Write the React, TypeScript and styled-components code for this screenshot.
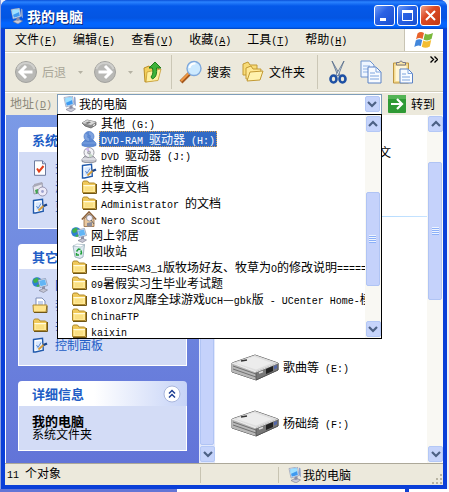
import React from "react";
import styled, { createGlobalStyle, css } from "styled-components";

const sans = `"Noto Sans CJK SC", "Noto Sans", sans-serif`;

const GlobalStyle = createGlobalStyle`
  * { box-sizing: border-box; }
  body { margin: 0; font: 12px/16px ${sans}; color: #000; overflow: hidden; }
  button, select { font: inherit; color: inherit; margin: 0; padding: 0; border: 0; background: none; }
  ul { list-style: none; margin: 0; padding: 0; }
  h1, h2, p { margin: 0; }
  svg { display: block; flex: none; }
`;

/* ---------- text ---------- */

const Latin = styled.span`
  font-family: "Liberation Mono", monospace;
  font-size: 10px;
`;

const Line = styled.span`
  white-space: pre;
`;

function Text({ children }: { children: string }) {
  return (
    <Line>
      {children.split(/([\x20-\x7e]+)/).map((part, i) =>
        i % 2 ? <Latin key={i}>{part}</Latin> : part
      )}
    </Line>
  );
}

/* ---------- icons ---------- */

const ComputerIcon = ({ size = 16 }: { size?: number }) => (
  <svg width={size} height={size} viewBox="0 0 16 16">
    <path d="M4 13.500l5-2.500 4.500 2-4.500 3z" fill="#c9cad8" stroke="#77788c" strokeWidth=".6" />
    <path d="M7.500 10l3-1v3.500l-3 .5z" fill="#8c8ea5" />
    <path d="M2 1.500l8.500-1.500 1.500 8.500-8 2.500z" fill="#e8eef8" stroke="#7d8cab" strokeWidth=".6" />
    <path d="M3 2.200l6.700-1.200 1.200 7-6.200 1.800z" fill="#3f9af0" />
    <path d="M3 2.200l6.700-1.200.5 3L3.700 7z" fill="#9fe0ff" />
    <path d="M12 .5l1.500 1 .5 9-2-2.500z" fill="#8ea3cf" />
  </svg>
);

const FolderIcon = () => (
  <svg width="16" height="16" viewBox="0 0 16 16">
    <path d="M1.500 13.500v-10l1-1.500h4l1.500 2h5.500l1 1v8.500z" fill="#f0c95a" stroke="#b08a2c" />
    <path d="M2.500 13V6h11.500v7z" fill="#ffe996" />
    <path d="M2.500 6.500H14" stroke="#fffbe0" />
    <path d="M4 11h8M4 9h8" stroke="#f5d671" />
    <path d="M15.500 5v9.500H2" stroke="#6e5618" fill="none" />
  </svg>
);

const RemovableIcon = () => (
  <svg width="16" height="16" viewBox="0 0 16 16">
    <path d="M1 8l5-3 9 2v3l-5 3-6-2z" fill="#8b8b8b" stroke="#585858" strokeWidth=".7" />
    <path d="M1 8l5-3 9 2-5 3z" fill="#d9d9d9" />
    <path d="M4 8l4-1.500 2 1L6.500 9z" fill="#777" />
    <path d="M12 10.500l2-1" stroke="#fff" />
  </svg>
);

const DiscIcon = ({ selected }: { selected?: boolean }) => {
  const c = selected ? ["#7fa3df", "#5f8bd4", "#4a78c6"] : ["#f2f2f6", "#c4c4cc", "#777783"];
  return (
    <svg width="16" height="16" viewBox="0 0 16 16">
      <path d="M1 12l3-3h8l3 3v2.500l-3 1H4l-3-1z" fill={c[1]} stroke={c[2]} strokeWidth=".7" />
      <path d="M1 12h14" stroke={c[0]} />
      <circle cx="8" cy="5.500" r="5" fill={c[0]} stroke={c[2]} strokeWidth=".7" />
      <path d="M8 5.500L4.500 2A5 5 0 0 1 8 .8z" fill={selected ? c[1] : "#cdb8ee"} />
      <path d="M8 5.500l4 3a5 5 0 0 1-4 2z" fill={selected ? c[1] : "#c6d8c8"} />
      <circle cx="8" cy="5.500" r="1.500" fill={c[1]} stroke={c[2]} strokeWidth=".5" />
    </svg>
  );
};

const ControlPanelIcon = () => (
  <svg width="16" height="16" viewBox="0 0 16 16">
    <path d="M1.500 2.500l9-1.200.8 12-7.800 1.700h-2z" fill="#fff" stroke="#2059ac" strokeWidth="1.400" />
    <path d="M3.500 4.500l6-.8.5 7.800-6.500 1.500z" fill="#d9e9ff" />
    <path d="M4.500 8l1.500 2.500L9 5.500" stroke="#5b8ad0" fill="none" />
    <path d="M6.500 12.500l6-5.500" stroke="#d79c38" strokeWidth="1.800" />
    <path d="M11.500 8l3.500-1.500" stroke="#17438c" strokeWidth="2.400" />
  </svg>
);

const HouseIcon = () => (
  <svg width="16" height="16" viewBox="0 0 16 16">
    <path d="M3 8v7.500h10V8L8 3z" fill="#e9c9a0" stroke="#94683c" strokeWidth=".8" />
    <path d="M.8 8.500L8 1l7.200 7.500" fill="none" stroke="#8a5e38" strokeWidth="1.600" />
    <circle cx="8.500" cy="7" r="3" fill="#f5f2ff" stroke="#888" strokeWidth=".8" />
    <path d="M6 15.500V12l5-1v4.500z" fill="#8d8d98" />
    <path d="M10 9l3 4" stroke="#666" />
  </svg>
);

const NetworkIcon = () => (
  <svg width="16" height="16" viewBox="0 0 16 16">
    <circle cx="5" cy="5" r="4.800" fill="#2f7fd0" />
    <path d="M1 3l4-2.500 2 2-2 3-3 .5zM4 9l3-2 1 2-2 1z" fill="#3fb24a" />
    <path d="M6 3l7.500-1.500 2 7-7.500 2z" fill="#e2e8f4" stroke="#6f7fa0" strokeWidth=".6" />
    <path d="M7 3.800l6-1.200 1.300 5.200-5.800 1.500z" fill="#62b5f5" />
    <path d="M10 10l3-1v3l-3 .8z" fill="#8d90aa" />
    <path d="M7 13.500l4.500-2 4 1.500-4 2.500z" fill="#c4c5d3" stroke="#77788c" strokeWidth=".6" />
  </svg>
);

const RecycleIcon = () => (
  <svg width="16" height="16" viewBox="0 0 16 16">
    <path d="M2 3l11.500-1.500L12 14l-3 1.500L4 14z" fill="#dce9ef" stroke="#8ea5b2" strokeWidth=".8" />
    <path d="M2 3l4-2 7.500.8L10 4z" fill="#fff" stroke="#9fb3bf" strokeWidth=".6" />
    <path d="M5.500 8.500l2-2.500 2 .5M10 7.500l.5 2.500-1 1.500M8 12H5.500v-2" fill="none" stroke="#20a03a" strokeWidth="1.500" />
  </svg>
);

const ChecklistIcon = () => (
  <svg width="16" height="16" viewBox="0 0 16 16">
    <path d="M2.500.8h8l3 3v11.500h-11z" fill="#fff" stroke="#6b7a9e" />
    <path d="M10.500.8v3h3" fill="#ccd6ee" stroke="#6b7a9e" />
    <path d="M5 8.500l2 3L11.500 6" fill="none" stroke="#e0401c" strokeWidth="2" />
  </svg>
);

const ProgramsIcon = () => (
  <svg width="16" height="16" viewBox="0 0 16 16">
    <path d="M1 5l9-3 1 9-9 2z" fill="#e6e6ee" stroke="#888899" strokeWidth=".8" />
    <path d="M2 3l8-2 1 2-9 3z" fill="#a9a9b8" />
    <path d="M3 9l3-1v4l-2 1z" fill="#42a550" />
    <circle cx="10.500" cy="10.500" r="4.500" fill="#eceaf8" stroke="#8380a0" strokeWidth=".8" />
    <circle cx="10.500" cy="10.500" r="1.400" fill="#9ea2cf" />
  </svg>
);

const DocumentsIcon = () => (
  <svg width="16" height="16" viewBox="0 0 16 16">
    <path d="M4 1h6l3 3v8H4z" fill="#fff" stroke="#6f82ae" strokeWidth=".9" />
    <path d="M6 5h5M6 7h5" stroke="#8ba6dc" />
    <path d="M1 8h14l-1 7H1.500z" fill="#ffe48c" stroke="#b08a2c" />
    <path d="M2 15.500h13V9" stroke="#6e5618" fill="none" />
  </svg>
);

const DriveIcon = () => (
  <svg width="48" height="28" viewBox="0 0 48 28">
    <path d="M1 9L24 1l23 8v7L25 26 1 18z" fill="#8d8d8d" stroke="#555" />
    <path d="M1 9L24 1l23 8-22 9z" fill="#dedede" />
    <path d="M5 9l18-6.500L41 9l-16 6.500z" fill="#ececec" />
    <path d="M1 9v9l24 8v-8z" fill="#b8b8b8" />
    <path d="M2 12l23 8M2 15l23 8" stroke="#707070" />
    <path d="M25 18l22-9v7l-22 10z" fill="#777" stroke="#4c4c4c" strokeWidth=".7" />
    <path d="M35 15l7-3v5l-7 3z" fill="#222" />
    <path d="M43 12l3-1v3l-3 1.500z" fill="#5266a8" />
    <path d="M28 19l4-1.500" stroke="#ddd" strokeWidth="1.500" />
    <path d="M10 7l6-1" stroke="#333" strokeWidth="1.500" />
    <path d="M1 9l24 9 22-9" fill="none" stroke="#fff" strokeWidth=".8" />
  </svg>
);

const CircleArrowIcon = ({ forward }: { forward?: boolean }) => (
  <svg width="24" height="24" viewBox="0 0 24 24">
    <circle cx="12" cy="12" r="10.500" fill="#b9b9b6" stroke="#a3a39f" />
    <path d="M3.500 9a9 9 0 0 1 17 0" fill="none" stroke="#cfcfcc" strokeWidth="2" />
    <path
      d={forward ? "M5.500 12h11M12 6l6 6-6 6" : "M18.500 12h-11M12 6l-6 6 6 6"}
      fill="none"
      stroke="#fff"
      strokeWidth="3"
    />
  </svg>
);

const UpFolderIcon = () => (
  <svg width="20" height="24" viewBox="0 0 20 24">
    <path d="M1 8l5-2 2 2 8-1-2 13-12 2z" fill="#f3cf5c" stroke="#b98f28" />
    <path d="M4 12l14-3-3 11.500-12 1.500z" fill="#fff0a0" stroke="#c79c34" strokeWidth=".8" />
    <path d="M9.500 19c4-2 4.500-6 4-11H18L12 2 6 8h3.500c.6 4 .8 6-1.500 9z" fill="#3fb23a" stroke="#1d7d1c" />
  </svg>
);

const SearchIcon = () => (
  <svg width="24" height="24" viewBox="0 0 24 24">
    <path d="M2 22l9-9" stroke="#a2561c" strokeWidth="4" />
    <path d="M2 21l8-8" stroke="#f19a45" strokeWidth="2" />
    <circle cx="15" cy="8.500" r="7" fill="#cdeaff" stroke="#7fa9dc" strokeWidth="1.400" />
    <path d="M10.500 8a5 5 0 0 1 6-4.500" fill="none" stroke="#fff" strokeWidth="2" />
  </svg>
);

const FoldersIcon = () => (
  <svg width="24" height="24" viewBox="0 0 24 24">
    <path d="M2 15V4l5-2 2 3h7v10z" fill="#f8dc78" stroke="#c39a34" />
    <path d="M5 19V8l5-2 2 3h8l-1 10z" fill="#ffe894" stroke="#c39a34" />
    <path d="M6 21l3-9 13-1-3 9z" fill="#fff2ae" stroke="#c39a34" />
  </svg>
);

const CutIcon = () => (
  <svg width="18" height="24" viewBox="0 0 18 24">
    <path d="M3 1l8 14-2 1z" fill="#c6d2e0" stroke="#536a88" strokeWidth=".8" />
    <path d="M15 1L7 15l2 1z" fill="#e9eff6" stroke="#536a88" strokeWidth=".8" />
    <ellipse cx="4.500" cy="19" rx="3" ry="3.500" fill="none" stroke="#1e50a4" strokeWidth="2.600" />
    <ellipse cx="13.500" cy="19" rx="3" ry="3.500" fill="none" stroke="#1e50a4" strokeWidth="2.600" />
  </svg>
);

const CopyIcon = () => (
  <svg width="22" height="24" viewBox="0 0 22 24">
    <path d="M1 1h9l4 4v12H1z" fill="#eff6ff" stroke="#6f94cf" />
    <path d="M3 6h7M3 9h8M3 12h5" stroke="#8fb2e5" />
    <path d="M8 7h8l5 5v11H8z" fill="#f8fbff" stroke="#5b82c4" />
    <path d="M16 7v5h5M10 13h5M10 16h9M10 19h9" stroke="#7fa5df" fill="none" />
  </svg>
);

const PasteIcon = () => (
  <svg width="22" height="24" viewBox="0 0 22 24">
    <path d="M1.500 3h15v20h-15z" fill="#f4da90" stroke="#bd953f" />
    <path d="M3.500 6h11v15h-11z" fill="#fff6d6" />
    <path d="M4.500 5V2.500h2.500L9 .8l2 1.700h2.500V5z" fill="#f6e3a6" stroke="#77778a" />
    <path d="M8 9h8l4.500 4.500V23H8z" fill="#f8fbff" stroke="#5b82c4" />
    <path d="M16 9v4.500h4.500M10 14h4M10 17h8M10 20h8" stroke="#7fa5df" fill="none" />
  </svg>
);

const FlagIcon = () => (
  <svg width="20" height="18" viewBox="0 0 20 18">
    <path d="M3.500 2.500Q6.500 0 10 2L8.500 8Q5 6 2 8.500z" fill="#e8632c" />
    <path d="M11 2.500q3 2 8-.5L17.500 8q-4 2.500-8 .5z" fill="#79b83c" />
    <path d="M1.800 9.500Q5 7.500 8.200 9L6.800 15Q3.500 13.500.3 16z" fill="#4287dc" />
    <path d="M9.200 9.500q4 2 8-.5L15.800 15.500q-4 2.500-8 .3z" fill="#f3bd32" />
  </svg>
);

const GoIcon = () => (
  <svg width="18" height="18" viewBox="0 0 18 18">
    <rect width="18" height="18" rx="1" fill="#2f9a35" />
    <path d="M0 0h18v4H0z" fill="#54b455" />
    <path d="M3 9h10M9 4l5 5-5 5" fill="none" stroke="#fff" strokeWidth="2.200" />
  </svg>
);

const Chevron = ({ up }: { up?: boolean }) => (
  <svg width="10" height="8" viewBox="0 0 10 8">
    <path d={up ? "M1 6l4-4 4 4" : "M1 2l4 4 4-4"} fill="none" stroke="#4d6185" strokeWidth="2.200" />
  </svg>
);

const CaretIcon = () => (
  <svg width="5" height="3" viewBox="0 0 5 3">
    <path d="M0 0h5L2.500 3z" fill="#b5b2a4" />
  </svg>
);

const MoreIcon = () => (
  <svg width="8" height="7" viewBox="0 0 8 7">
    <path d="M.5.5l3 3-3 3M4.500.5l3 3-3 3" fill="none" stroke="#000" strokeWidth="1.400" />
  </svg>
);

const CollapseIcon = () => (
  <svg width="18" height="18" viewBox="0 0 18 18">
    <circle cx="9" cy="9" r="8" fill="#fff" stroke="#a9b6dc" />
    <path d="M6 8.500l3-3 3 3M6 12.500l3-3 3 3" fill="none" stroke="#1f3f94" strokeWidth="1.500" />
  </svg>
);

const GripIcon = () => (
  <svg width="12" height="12" viewBox="0 0 12 12">
    <path d="M9 1h2v2H9zM5 5h2v2H5zM9 5h2v2H9zM1 9h2v2H1zM5 9h2v2H5zM9 9h2v2H9z" fill="#b8b4a2" />
  </svg>
);

/* ---------- window frame ---------- */

const Desktop = styled.div`
  height: 100vh;
  padding: 0 2px 3px 1px;
  background:
    linear-gradient(#1040d0, #1040d0) 405px 100% / 4px 3px no-repeat,
    linear-gradient(90deg, #6375d6 177px, #fff 177px) 0 100% / 100% 3px no-repeat,
    linear-gradient(90deg, #8c9fe0 1px, #eef1fa 1px);
`;

const Window = styled.main`
  height: 100%;
  display: flex;
  flex-direction: column;
  padding: 0 4px 4px;
  background: #0a3fd8;
  border-radius: 7px 7px 0 0;
`;

const TitleBar = styled.header`
  flex: none;
  height: 29px;
  margin: 0 -4px;
  padding: 2px 6px 0 8px;
  display: flex;
  align-items: center;
  border-radius: 7px 7px 0 0;
  background: linear-gradient(#0a50d8, #2a83ff 2px, #0459ea 6px, #0455e2 18px, #0265ff 23px, #0263fb 27px, #0244bd);
`;

const Title = styled.h1`
  flex: 1;
  padding-left: 2px;
  font-size: 14px;
  line-height: 20px;
  color: #fff;
  text-shadow: 1px 1px #0a2a80;
`;

const CaptionButton = styled.button<{ $close?: boolean }>`
  width: 21px;
  height: 21px;
  display: grid;
  place-items: center;
  border: 1px solid #fff;
  border-radius: 3px;
  background: ${(p) =>
    p.$close
      ? "linear-gradient(135deg, #f0a58c, #dc4a24 40%, #c03a14)"
      : "linear-gradient(135deg, #6f9cf8, #2a62e4 40%, #1a4fd0)"};
`;

const CaptionButtons = styled.div`
  display: flex;
  gap: 2px;
`;

const barFace = css`
  flex: none;
  display: flex;
  align-items: center;
  background: #ece9dc;
`;

const MenuBar = styled.nav`
  ${barFace}
  height: 23px;
  padding-left: 10px;
  gap: 16px;
  border-bottom: 1px solid #d0ccba;
`;

const MenuButton = styled.button`
  white-space: nowrap;
`;

const Throbber = styled.div`
  align-self: stretch;
  width: 39px;
  margin-left: auto;
  display: grid;
  place-items: center;
  background: #fff;
  border-left: 1px solid #c8c4b4;
`;

const ToolBar = styled.div`
  ${barFace}
  height: 40px;
  padding: 0 5px 0 9px;
  border-top: 1px solid #fff;
  border-bottom: 1px solid #d0ccba;
`;

const ToolButton = styled.button<{ $gap?: number; $after?: number }>`
  display: flex;
  align-items: center;
  gap: ${(p) => p.$gap ?? 4}px;
  margin-right: ${(p) => p.$after ?? 10}px;
  white-space: nowrap;
  &:disabled { color: #a9a698; }
`;

const Separator = styled.span<{ $after: number }>`
  width: 1px;
  height: 34px;
  margin-right: ${(p) => p.$after}px;
  background: #cbc7b6;
`;

const Caret = styled.span`
  padding-left: 8px;
`;

const More = styled.button`
  align-self: flex-start;
  margin-left: auto;
  padding-top: 3px;
`;

const AddressBar = styled.div`
  ${barFace}
  position: relative;
  z-index: 2;
  height: 23px;
  padding: 0 8px 0 5px;
  border-top: 1px solid #fff;
`;

const AddressLabel = styled.label`
  width: 47px;
  color: #8b887a;
  white-space: nowrap;
`;

const Combo = styled.div`
  position: relative;
  flex: 1;
  height: 21px;
  display: flex;
  align-items: center;
  padding: 0 1px 0 4px;
  background: #fff;
  border: 1px solid #7f9db9;
`;

const ComboSelect = styled.select`
  flex: 1;
  appearance: none;
  padding-left: 1px;
  outline: 0;
`;

const GoButton = styled.button`
  display: flex;
  align-items: center;
  gap: 5px;
  margin-left: 6px;
`;

/* ---------- scroll bars ---------- */

const ScrollTrack = styled.div<{ $tint?: boolean }>`
  flex: none;
  width: 16px;
  display: flex;
  flex-direction: column;
  padding: 1px;
  background: ${(p) => (p.$tint ? "#e3e9fb" : "#f9f8f3")};
`;

const ScrollButton = styled.button`
  flex: none;
  width: 15px;
  height: 16px;
  display: grid;
  place-items: center;
  border: 1px solid #b4c8f6;
  border-radius: 2px;
  background: #c6d4fb;
`;

const ScrollThumb = styled.div<{ $before: number; $length: number }>`
  flex: 0 1 ${(p) => p.$length}px;
  margin: ${(p) => p.$before}px 0 auto;
  display: grid;
  place-items: center;
  border: 1px solid #b0c4f4;
  border-radius: 2px;
  background: #c5d2fb;
`;

const ThumbGrip = styled.span`
  width: 7px;
  height: 8px;
  background: repeating-linear-gradient(#eef4fe 0 1px, #8cb0f8 1px 2px);
`;

function ScrollBar(props: { before: number; length: number; tint?: boolean }) {
  return (
    <ScrollTrack $tint={props.tint}>
      <ScrollButton aria-label="向上滚动"><Chevron up /></ScrollButton>
      <ScrollThumb $before={props.before} $length={props.length}><ThumbGrip /></ScrollThumb>
      <ScrollButton aria-label="向下滚动"><Chevron /></ScrollButton>
    </ScrollTrack>
  );
}

/* ---------- address drop-down ---------- */

const Popup = styled.div`
  position: absolute;
  top: 100%;
  left: -1px;
  right: -1px;
  height: 225px;
  display: flex;
  border: 1px solid #000;
  background: #fff;
`;

const PlaceList = styled.ul`
  flex: 1;
  min-width: 0;
  overflow: hidden;
`;

const Place = styled.li<{ $depth: number }>`
  height: 16px;
  display: flex;
  gap: 2px;
  padding-left: ${(p) => 3 + p.$depth * 10}px;
`;

const PlaceName = styled.span<{ $selected?: boolean }>`
  padding: 0 2px;
  line-height: 16px;
  ${(p) =>
    p.$selected &&
    css`
      color: #fff;
      background: #316ac5;
      outline: 1px dotted #d8a050;
      outline-offset: -1px;
    `}
`;

const places: { depth: number; name: string; icon: React.ReactNode; selected?: boolean }[] = [
  { depth: 2, name: "其他 (G:)", icon: <RemovableIcon /> },
  { depth: 2, name: "DVD-RAM 驱动器 (H:)", icon: <DiscIcon selected />, selected: true },
  { depth: 2, name: "DVD 驱动器 (J:)", icon: <DiscIcon /> },
  { depth: 2, name: "控制面板", icon: <ControlPanelIcon /> },
  { depth: 2, name: "共享文档", icon: <FolderIcon /> },
  { depth: 2, name: "Administrator 的文档", icon: <FolderIcon /> },
  { depth: 2, name: "Nero Scout", icon: <HouseIcon /> },
  { depth: 1, name: "网上邻居", icon: <NetworkIcon /> },
  { depth: 1, name: "回收站", icon: <RecycleIcon /> },
  { depth: 1, name: "======SAM3_1版牧场好友、牧草为O的修改说明======", icon: <FolderIcon /> },
  { depth: 1, name: "09暑假实习生毕业考试题", icon: <FolderIcon /> },
  { depth: 1, name: "Bloxorz风靡全球游戏UCH—gbk版 - UCenter Home-模", icon: <FolderIcon /> },
  { depth: 1, name: "ChinaFTP", icon: <FolderIcon /> },
  { depth: 1, name: "kaixin", icon: <FolderIcon /> },
];

/* ---------- body ---------- */

const Body = styled.div`
  flex: 1;
  min-height: 0;
  display: flex;
  background: #fff;
`;

const Sidebar = styled.aside`
  flex: none;
  width: 194px;
  overflow: hidden;
  display: flex;
  flex-direction: column;
  gap: 15px;
  padding: 12px;
  border-left: 1px solid #fff;
  background: linear-gradient(#7b9ae6, #6274d8);
`;

const Panel = styled.section`
  flex: none;
`;

const PanelHeader = styled.header`
  height: 25px;
  display: flex;
  align-items: center;
  justify-content: space-between;
  padding: 0 6px 0 14px;
  border-radius: 4px 4px 0 0;
  background: linear-gradient(90deg, #fff 45%, #c6d3f7);
`;

const PanelTitle = styled.h2`
  font-size: 13px;
  line-height: 18px;
  color: #215dc6;
`;

const PanelBody = styled.div<{ $height: number }>`
  min-height: ${(p) => p.$height}px;
  padding: 8px 13px;
  border: 1px solid #fff;
  border-top: 0;
  background: #d3dcf6;
`;

const TaskList = styled.ul<{ $pitch: number }>`
  display: grid;
  grid-auto-rows: ${(p) => p.$pitch}px;
`;

const TaskLink = styled.a`
  display: flex;
  align-items: center;
  gap: 7px;
  color: #215dc6;
  text-decoration: none;
`;

const DetailName = styled.p`
  font-size: 13px;
  font-weight: 700;
  line-height: 14px;
`;

const DetailType = styled.p`
  line-height: 12px;
`;

const Content = styled.section`
  flex: 1;
  min-width: 0;
  overflow: hidden;
`;

const FolderName = styled.p`
  padding: 29px 36px 0 0;
  text-align: right;
`;

const GroupRule = styled.hr`
  height: 1px;
  margin: 56px 0 123px;
  border: 0;
  background: linear-gradient(90deg, #70bfff, #c8e4ff);
`;

const Drive = styled.li`
  height: 56px;
  display: flex;
  align-items: center;
  gap: 4px;
  padding-left: 16px;
`;

const StatusBar = styled.footer`
  ${barFace}
  height: 22px;
  padding-left: 2px;
  border-top: 1px solid #aca899;
`;

const StatusCell = styled.div<{ $width?: number }>`
  ${(p) => (p.$width ? `flex: none; width: ${p.$width}px;` : "flex: 1;")}
  height: 16px;
  display: flex;
  align-items: center;
  & + & {
    border-left: 1px solid #c8c4b2;
    padding-left: 8px;
  }
`;

const Grip = styled.div`
  align-self: flex-end;
`;

const menus: [string, string][] = [
  ["文件", "F"], ["编辑", "E"], ["查看", "V"], ["收藏", "A"], ["工具", "T"], ["帮助", "H"],
];

const systemTasks: [string, React.ReactNode][] = [
  ["查看系统信息", <ChecklistIcon />],
  ["添加/删除程序", <ProgramsIcon />],
  ["更改一个设置", <ControlPanelIcon />],
];

const otherPlaces: [string, React.ReactNode][] = [
  ["网上邻居", <NetworkIcon />],
  ["我的文档", <DocumentsIcon />],
  ["共享文档", <FolderIcon />],
  ["控制面板", <ControlPanelIcon />],
];

function Tasks({ items, pitch }: { items: [string, React.ReactNode][]; pitch: number }) {
  return (
    <TaskList $pitch={pitch}>
      {items.map(([name, icon]) => (
        <li key={name}>
          <TaskLink href="#">{icon}<Text>{name}</Text></TaskLink>
        </li>
      ))}
    </TaskList>
  );
}

export default function App() {
  return (
    <Desktop>
      <GlobalStyle />
      <Window>
        <TitleBar>
          <ComputerIcon />
          <Title>我的电脑</Title>
          <CaptionButtons>
            <CaptionButton aria-label="最小化">
              <svg width="13" height="13"><path d="M2 9h6v3H2z" fill="#fff" /></svg>
            </CaptionButton>
            <CaptionButton aria-label="最大化">
              <svg width="13" height="13"><path d="M1.500 2v9.500h10V2" fill="none" stroke="#fff" /><path d="M1 1h11v3H1z" fill="#fff" /></svg>
            </CaptionButton>
            <CaptionButton $close aria-label="关闭">
              <svg width="13" height="13"><path d="M2 2l9 9M11 2l-9 9" stroke="#fff" strokeWidth="2" /></svg>
            </CaptionButton>
          </CaptionButtons>
        </TitleBar>

        <MenuBar>
          {menus.map(([name, key]) => (
            <MenuButton key={key}>{name}<Latin>(<u>{key}</u>)</Latin></MenuButton>
          ))}
          <Throbber><FlagIcon /></Throbber>
        </MenuBar>

        <ToolBar>
          <ToolButton disabled>
            <CircleArrowIcon />后退<Caret><CaretIcon /></Caret>
          </ToolButton>
          <ToolButton disabled $gap={3} aria-label="前进">
            <CircleArrowIcon forward /><Caret><CaretIcon /></Caret>
          </ToolButton>
          <ToolButton $after={8} aria-label="向上"><UpFolderIcon /></ToolButton>
          <Separator $after={7} />
          <ToolButton><SearchIcon />搜索</ToolButton>
          <ToolButton $after={12}><FoldersIcon />文件夹</ToolButton>
          <Separator $after={11} />
          <ToolButton $after={13} aria-label="剪切"><CutIcon /></ToolButton>
          <ToolButton aria-label="复制"><CopyIcon /></ToolButton>
          <ToolButton $after={0} aria-label="粘贴"><PasteIcon /></ToolButton>
          <More aria-label="更多"><MoreIcon /></More>
        </ToolBar>

        <AddressBar>
          <AddressLabel htmlFor="address">地址<Latin>(<u>D</u>)</Latin></AddressLabel>
          <Combo>
            <ComputerIcon />
            <ComboSelect id="address"><option>我的电脑</option></ComboSelect>
            <ScrollButton aria-label="展开"><Chevron /></ScrollButton>
            <Popup>
              <PlaceList role="listbox" aria-label="位置">
                {places.map((p) => (
                  <Place key={p.name} $depth={p.depth} role="option" aria-selected={!!p.selected}>
                    {p.icon}
                    <PlaceName $selected={p.selected}><Text>{p.name}</Text></PlaceName>
                  </Place>
                ))}
              </PlaceList>
              <ScrollBar before={60} length={94} />
            </Popup>
          </Combo>
          <GoButton><GoIcon />转到</GoButton>
        </AddressBar>

        <Body>
          <Sidebar>
            <Panel>
              <PanelHeader><PanelTitle>系统任务</PanelTitle></PanelHeader>
              <PanelBody $height={77}><Tasks items={systemTasks} pitch={19} /></PanelBody>
            </Panel>
            <Panel>
              <PanelHeader><PanelTitle>其它位置</PanelTitle></PanelHeader>
              <PanelBody $height={97}><Tasks items={otherPlaces} pitch={20} /></PanelBody>
            </Panel>
            <Panel>
              <PanelHeader><PanelTitle>详细信息</PanelTitle><CollapseIcon /></PanelHeader>
              <PanelBody $height={45}>
                <DetailName>我的电脑</DetailName>
                <DetailType>系统文件夹</DetailType>
              </PanelBody>
            </Panel>
          </Sidebar>
          <ScrollBar tint before={0} length={313} />
          <Content>
            <FolderName>文</FolderName>
            <GroupRule />
            <ul>
              <Drive><DriveIcon /><Text>歌曲等 (E:)</Text></Drive>
              <Drive><DriveIcon /><Text>杨础绮 (F:)</Text></Drive>
            </ul>
          </Content>
          <ScrollBar before={30} length={138} />
        </Body>

        <StatusBar>
          <StatusCell $width={193}><Text>11 个对象</Text></StatusCell>
          <StatusCell $width={78} />
          <StatusCell><ComputerIcon /><Text>我的电脑</Text></StatusCell>
          <Grip><GripIcon /></Grip>
        </StatusBar>
      </Window>
    </Desktop>
  );
}
